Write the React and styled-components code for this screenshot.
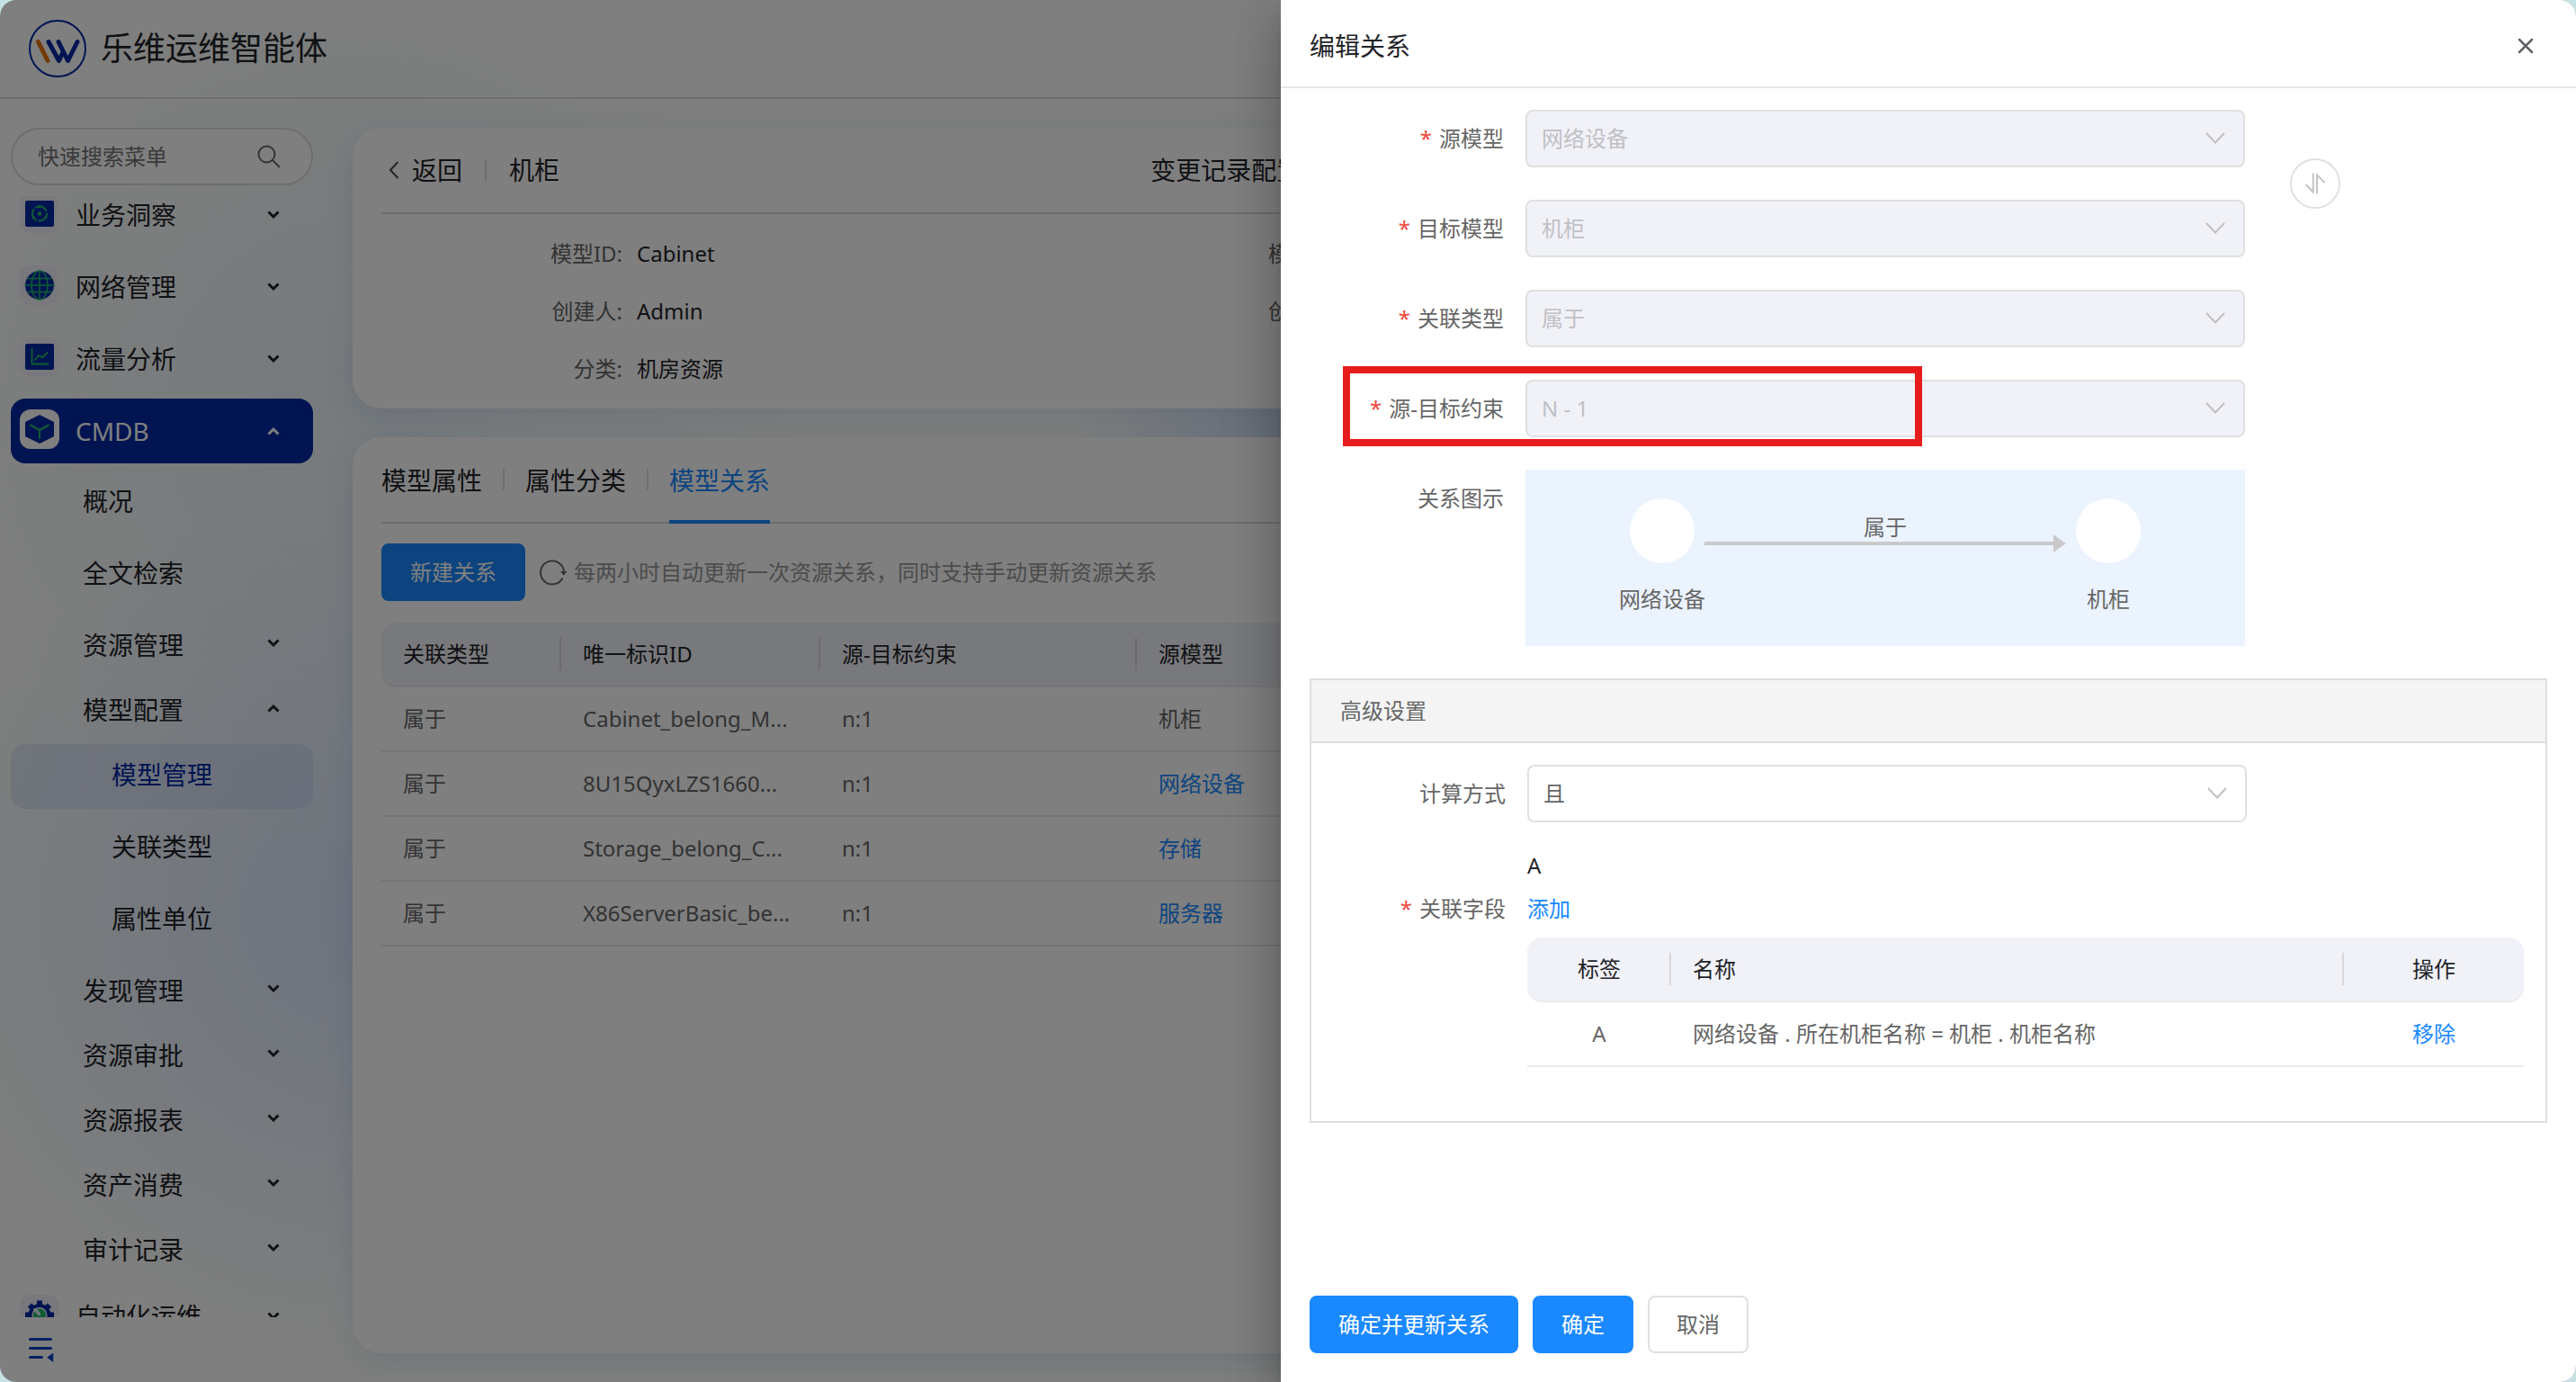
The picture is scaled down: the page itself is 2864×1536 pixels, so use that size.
import { useLayoutEffect, useRef, useState } from "react";
import styled, { createGlobalStyle, css } from "styled-components";

const navy = "#0029a3";
const blue = "#1a89ff";
const green = "#22b866";

const menu = [
  { label: "业务洞察", level: 0, icon: "insight", arrow: "down" },
  { label: "网络管理", level: 0, icon: "globe", arrow: "down" },
  { label: "流量分析", level: 0, icon: "chart", arrow: "down" },
  { label: "CMDB", level: 0, icon: "cube", arrow: "up", open: true },
  { label: "概况", level: 1 },
  { label: "全文检索", level: 1 },
  { label: "资源管理", level: 1, arrow: "down" },
  { label: "模型配置", level: 1, arrow: "up" },
  { label: "模型管理", level: 2, current: true },
  { label: "关联类型", level: 2 },
  { label: "属性单位", level: 2 },
  { label: "发现管理", level: 1, arrow: "down" },
  { label: "资源审批", level: 1, arrow: "down" },
  { label: "资源报表", level: 1, arrow: "down" },
  { label: "资产消费", level: 1, arrow: "down" },
  { label: "审计记录", level: 1, arrow: "down" },
  { label: "自动化运维", level: 0, icon: "gear", arrow: "down" },
];

const infos = [
  { label: "模型ID:", value: "Cabinet" },
  { label: "模型名称:", value: "机柜" },
  { label: "创建人:", value: "Admin" },
  { label: "创建时间:", value: "-" },
  { label: "分类:", value: "机房资源" },
];

const relations = [
  { type: "属于", uid: "Cabinet_belong_M...", rule: "n:1", source: "机柜" },
  { type: "属于", uid: "8U15QyxLZS1660...", rule: "n:1", source: "网络设备", link: true },
  { type: "属于", uid: "Storage_belong_C...", rule: "n:1", source: "存储", link: true },
  { type: "属于", uid: "X86ServerBasic_be...", rule: "n:1", source: "服务器", link: true },
];

const Logo = () => (
  <svg width="64" height="64" viewBox="0 0 64 64" fill="none" strokeLinecap="round" strokeLinejoin="round">
    <circle cx="32" cy="32" r="31" stroke={navy} strokeWidth="2" />
    <path d="M10.500 24.500 21 45.500" stroke="#e8740c" strokeWidth="5" />
    <path d="M22 24.500 33.500 45.500 38 36M33 24.500 43.500 45.500 54 24.500" stroke={navy} strokeWidth="5" />
  </svg>
);

const MenuIcon = ({ name }) => (
  <svg width="44" height="44" viewBox="0 0 44 44" fill="none" strokeLinecap="round" strokeLinejoin="round">
    {name === "insight" && (
      <>
        <rect x="6" y="8" width="32" height="29" rx="2" fill={navy} />
        <circle cx="22" cy="22.500" r="2.300" fill={green} />
        <circle cx="22" cy="22.500" r="8" stroke={green} strokeWidth="2" strokeDasharray="13 3.700" />
        <circle cx="22" cy="14.500" r="1.500" fill={green} />
        <circle cx="29" cy="26.500" r="1.500" fill={green} />
        <circle cx="15" cy="26.500" r="1.500" fill={green} />
      </>
    )}
    {name === "globe" && (
      <>
        <circle cx="22" cy="22" r="16" fill={navy} />
        <g stroke={green} strokeWidth="1.500">
          <ellipse cx="22" cy="22" rx="9" ry="16" />
          <path d="M22 6v32M6 22h32M8.500 14.500h27M8.500 29.500h27" />
        </g>
      </>
    )}
    {name === "chart" && (
      <>
        <rect x="6" y="7" width="32" height="29" rx="2" fill={navy} />
        <path d="M13.500 13v16.500H31.500M17 25l4-5 4 2.500 5.500-5.500" stroke={green} strokeWidth="1.800" />
      </>
    )}
    {name === "cube" && (
      <>
        <path d="M22 6 38 14v16L22 38 6 30V14z" fill={navy} />
        <path d="M12 17.500 22 23 32 17.500M22 23v9" stroke={green} strokeWidth="2" />
      </>
    )}
    {name === "gear" && (
      <>
        <circle cx="22" cy="22.500" r="12.500" fill={navy} />
        <path
          d="M22 6.500v32M6 22.500h32M11 11.500l22 22M33 11.500l-22 22"
          stroke={navy}
          strokeWidth="6"
          strokeLinecap="butt"
        />
        <circle cx="22" cy="22.500" r="8.500" fill="#e8e9fa" />
        <circle cx="22" cy="22.500" r="7" fill={green} />
        <path d="M17 16.500l4.500 5" stroke="#e8e9fa" strokeWidth="3.500" />
      </>
    )}
  </svg>
);

const Arrow = ({ dir }) => (
  <svg width="14" height="10" viewBox="0 0 14 10" fill="none" stroke="currentColor" strokeWidth="3">
    <path d={dir === "up" ? "M1.500 8.500 7 3l5.500 5.500" : "M1.500 1.500 7 7l5.500-5.500"} />
  </svg>
);

const SelectField = ({ id, label, value, required, disabled }) => (
  <Row>
    <Label htmlFor={id}>
      {required && <Star>*</Star>}
      {label}
    </Label>
    <SelectBox>
      <Select id={id} disabled={disabled} defaultValue={value}>
        <option value={value}>{value}</option>
      </Select>
      <svg width="22" height="14" viewBox="0 0 22 14" fill="none" stroke="#c0c0c4" strokeWidth="2" strokeLinecap="round">
        <path d="M1.500 1.500 11 11.500 20.500 1.500" />
      </svg>
    </SelectBox>
  </Row>
);

const Sidebar = () => {
  const list = useRef(null);

  useLayoutEffect(() => {
    list.current.scrollTop = 15;
  }, []);

  return (
    <Side>
      <Search>
        <input type="text" placeholder="快速搜索菜单" aria-label="快速搜索菜单" />
        <svg width="26" height="26" viewBox="0 0 26 26" fill="none" stroke="#666" strokeWidth="2" strokeLinecap="round">
          <circle cx="10.500" cy="10.500" r="9" />
          <path d="M17 17l7.500 7.500" />
        </svg>
      </Search>
      <Menu ref={list}>
        {menu.map((item) => (
          <MenuItem
            key={item.label}
            $level={item.level}
            $open={item.open}
            $current={item.current}
            $spaced={item.level === 0 || !item.arrow}
          >
            {item.icon && (
              <IconTile $open={item.open}>
                <MenuIcon name={item.icon} />
              </IconTile>
            )}
            <span>{item.label}</span>
            {item.arrow && <Arrow dir={item.arrow} />}
          </MenuItem>
        ))}
      </Menu>
      <Collapse aria-label="收起菜单">
        <svg width="28" height="28" viewBox="0 0 28 28" fill="none" stroke="#0a43c8" strokeWidth="3" strokeLinecap="round">
          <path d="M1.500 2.500h23M1.500 12.500h23M1.500 22.500h13" />
          <path d="M26.500 19v7.500l-5-3.800z" fill="#0a43c8" strokeWidth="1.500" />
        </svg>
      </Collapse>
    </Side>
  );
};

const ModelPage = () => (
  <Main>
    <Card>
      <PageHead>
        <Crumb>
          <Back>
            <svg width="12" height="20" viewBox="0 0 12 20" fill="none" stroke="#4a4d55" strokeWidth="2">
              <path d="M10.500 1 2 10l8.500 9" />
            </svg>
            返回
          </Back>
          <Divider />
          <span>机柜</span>
        </Crumb>
        <span>变更记录配置</span>
      </PageHead>
      <InfoGrid>
        {infos.map((info) => (
          <Info key={info.label}>
            <dt>{info.label}</dt>
            <dd>{info.value}</dd>
          </Info>
        ))}
      </InfoGrid>
    </Card>
    <Card $grow>
      <Tabs>
        <Tab>模型属性</Tab>
        <Divider />
        <Tab>属性分类</Tab>
        <Divider />
        <Tab $active>模型关系</Tab>
      </Tabs>
      <Toolbar>
        <Button $primary>新建关系</Button>
        <Hint>
          <svg width="30" height="30" viewBox="0 0 30 30" fill="none" stroke="#666" strokeWidth="2">
            <path d="M25.500 21.500A13 13 0 1 1 27 16" />
            <path d="M23 14h7.500l-3.700 4.500z" fill="#666" stroke="none" />
          </svg>
          每两小时自动更新一次资源关系，同时支持手动更新资源关系
        </Hint>
      </Toolbar>
      <Table>
        <colgroup>
          <Col $w={200} />
          <Col $w={288} />
          <Col $w={352} />
          <col />
        </colgroup>
        <thead>
          <tr>
            <th>关联类型</th>
            <th>唯一标识ID</th>
            <th>源-目标约束</th>
            <th>源模型</th>
          </tr>
        </thead>
        <tbody>
          {relations.map((r) => (
            <tr key={r.uid}>
              <td>{r.type}</td>
              <td>{r.uid}</td>
              <td>{r.rule}</td>
              <td>{r.link ? <a href="#model">{r.source}</a> : r.source}</td>
            </tr>
          ))}
        </tbody>
      </Table>
    </Card>
  </Main>
);

const RelationDrawer = ({ onClose }) => (
  <Drawer role="dialog" aria-label="编辑关系">
    <DrawerHead>
      <h2>编辑关系</h2>
      <IconButton aria-label="关闭" onClick={onClose}>
        <svg width="18" height="18" viewBox="0 0 18 18" stroke="#606266" strokeWidth="2.500" strokeLinecap="round">
          <path d="M2 2l14 14M16 2 2 16" />
        </svg>
      </IconButton>
    </DrawerHead>

    <DrawerBody>
      <SwapGroup>
        <Fields>
          <SelectField id="source" label="源模型" value="网络设备" required disabled />
          <SelectField id="target" label="目标模型" value="机柜" required disabled />
        </Fields>
        <Swap disabled aria-label="交换">
          <svg width="24" height="24" viewBox="0 0 24 24" fill="none" stroke="#c4c4c8" strokeWidth="2" strokeLinecap="round">
            <path d="M9.800 1.500v20L2 13.500M14 22.500V2.500l8 8" />
          </svg>
        </Swap>
      </SwapGroup>
      <SelectField id="type" label="关联类型" value="属于" required disabled />
      <Marked>
        <SelectField id="rule" label="源-目标约束" value="N - 1" required disabled />
      </Marked>
      <Row>
        <Label as="span">关系图示</Label>
        <Diagram>
          <Node>
            <i />
            网络设备
          </Node>
          <Edge>
            属于
            <svg width="402" height="20" viewBox="0 0 402 20" fill="#c9c9cc">
              <path d="M0 8h388V0l14 10-14 10v-8H0z" />
            </svg>
          </Edge>
          <Node>
            <i />
            机柜
          </Node>
        </Diagram>
      </Row>

      <Panel>
        <PanelTitle>高级设置</PanelTitle>
        <PanelBody>
          <SelectField id="mode" label="计算方式" value="且" />
          <Row>
            <FieldLabel as="span">
              <Star>*</Star>
              关联字段
            </FieldLabel>
            <FieldList>
              <Line>A</Line>
              <Line>
                <a href="#add">添加</a>
              </Line>
              <Table $centered>
                <colgroup>
                  <Col $w={160} />
                  <col />
                  <Col $w={200} />
                </colgroup>
                <thead>
                  <tr>
                    <th>标签</th>
                    <th>名称</th>
                    <th>操作</th>
                  </tr>
                </thead>
                <tbody>
                  <tr>
                    <td>A</td>
                    <td>网络设备 . 所在机柜名称 = 机柜 . 机柜名称</td>
                    <td>
                      <a href="#remove">移除</a>
                    </td>
                  </tr>
                </tbody>
              </Table>
            </FieldList>
          </Row>
        </PanelBody>
      </Panel>
    </DrawerBody>

    <DrawerFoot>
      <Button $primary>确定并更新关系</Button>
      <Button $primary>确定</Button>
      <Button onClick={onClose}>取消</Button>
    </DrawerFoot>
  </Drawer>
);

const App = () => {
  const [open, setOpen] = useState(true);

  return (
    <>
      <GlobalStyle />
      <Frame>
        <TopBar>
          <Logo />
          <h1>乐维运维智能体</h1>
        </TopBar>
        <Content>
          <Sidebar />
          <ModelPage />
        </Content>
        {open && (
          <Mask>
            <RelationDrawer onClose={() => setOpen(false)} />
          </Mask>
        )}
      </Frame>
    </>
  );
};

const GlobalStyle = createGlobalStyle`
  *, *::before, *::after {
    box-sizing: border-box;
  }

  body {
    margin: 0;
    background: #c5e1e4;
    color: #1f2329;
    font-family: "Noto Sans", "Noto Sans CJK SC", sans-serif;
    font-size: 24px;
    line-height: 32px;
  }

  h1, h2, dl, dd {
    margin: 0;
    font-weight: normal;
  }

  button, input, select {
    font: inherit;
    color: inherit;
  }

  button {
    border: none;
    padding: 0;
    background: none;
    text-align: left;
    cursor: pointer;
  }

  a {
    color: ${blue};
    text-decoration: none;
  }
`;

const Frame = styled.div`
  position: relative;
  display: flex;
  flex-direction: column;
  height: 100vh;
  border-radius: 18px;
  overflow: hidden;
  background:
    radial-gradient(circle at 14% 66%, rgba(210, 224, 252, 0.8), transparent 18%),
    radial-gradient(circle at 14% 30%, rgba(232, 243, 250, 0.8), transparent 18%),
    radial-gradient(circle at 52% 30%, rgba(196, 218, 250, 0.9), transparent 16%),
    #fcfefc;
`;

const TopBar = styled.header`
  display: flex;
  align-items: center;
  gap: 16px;
  height: 110px;
  padding: 0 32px;
  border-bottom: 2px solid #dcdcdc;

  h1 {
    font-size: 36px;
    line-height: 48px;
  }
`;

const Content = styled.div`
  flex: 1;
  display: flex;
  gap: 32px;
  min-height: 0;
`;

const Side = styled.aside`
  flex: none;
  display: flex;
  flex-direction: column;
  width: 360px;
  padding: 32px 12px 0;
`;

const Search = styled.label`
  display: flex;
  align-items: center;
  height: 64px;
  margin-bottom: 12px;
  padding: 0 34px 0 28px;
  border: 2px solid #dcdcdc;
  border-radius: 32px;
  background: #fff;

  input {
    flex: 1;
    min-width: 0;
    padding: 0;
    border: none;
    outline: none;
    background: none;
  }

  input::placeholder {
    color: #757575;
  }
`;

const Menu = styled.nav`
  flex: 1;
  display: flex;
  flex-direction: column;
  min-height: 0;
  overflow-y: auto;
  scrollbar-width: none;
`;

const indents = ["10px", "80px", "112px"];

const MenuItem = styled.button`
  flex: none;
  display: flex;
  align-items: center;
  gap: 18px;
  height: 72px;
  margin-bottom: ${(p) => (p.$spaced ? "8px" : "0")};
  padding: 0 37px ${(p) => (p.$level ? "4px" : "0")} ${(p) => indents[p.$level]};
  border-radius: 16px;
  font-size: 28px;

  span {
    flex: 1;
  }

  > svg {
    margin-bottom: ${(p) => (p.$level === 1 ? "4px" : "0")};
  }

  ${(p) =>
    p.$open &&
    css`
      background: ${navy};
      color: #fff;
    `}

  ${(p) =>
    p.$current &&
    css`
      background: rgba(190, 206, 240, 0.4);
      color: ${navy};
    `}
`;

const IconTile = styled.i`
  display: flex;
  margin-bottom: 4px;
  border-radius: 12px;
  background: ${(p) => (p.$open ? "#fff" : "#f0f1fa")};
`;

const Collapse = styled.button`
  display: flex;
  align-items: center;
  height: 72px;
  padding-left: 20px;
`;

const Main = styled.main`
  flex: 1;
  display: flex;
  flex-direction: column;
  gap: 32px;
  min-width: 0;
  padding: 32px 32px 32px 0;
`;

const Card = styled.section`
  flex: ${(p) => (p.$grow ? "1" : "none")};
  padding: 0 32px;
  border-radius: 32px;
  background: #fff;
  box-shadow: 0 8px 32px rgba(60, 90, 170, 0.14);
`;

const PageHead = styled.div`
  display: grid;
  grid-template-columns: 36% 1fr;
  align-items: center;
  height: 96px;
  border-bottom: 2px solid #dcdcdc;
  font-size: 28px;
`;

const Crumb = styled.div`
  display: flex;
  align-items: center;
  gap: 25px;
`;

const Back = styled.button`
  display: flex;
  align-items: center;
  gap: 14px;
  padding-left: 8px;
`;

const Divider = styled.i`
  width: 2px;
  height: 24px;
  background: #dcdcdc;
`;

const InfoGrid = styled.dl`
  display: grid;
  grid-template-columns: 31% 1fr;
  column-gap: 84px;
  padding: 12px 0;
`;

const Info = styled.div`
  display: grid;
  grid-template-columns: 268px 1fr;
  column-gap: 16px;
  line-height: 64px;

  dt {
    color: #666;
    text-align: right;
  }
`;

const Tabs = styled.div`
  display: flex;
  align-items: center;
  gap: 23px;
  height: 96px;
  border-bottom: 2px solid #dcdcdc;
`;

const Tab = styled.button`
  align-self: flex-start;
  height: 96px;
  border-top: 4px solid transparent;
  border-bottom: 4px solid ${(p) => (p.$active ? blue : "transparent")};
  color: ${(p) => (p.$active ? blue : "inherit")};
  font-size: 28px;
`;

const Toolbar = styled.div`
  display: flex;
  align-items: center;
  gap: 16px;
  margin: 22px 0 24px;
`;

const Hint = styled.div`
  display: flex;
  align-items: center;
  gap: 8px;
  color: #999;
`;

const Button = styled.button`
  height: 64px;
  padding: 0 30px;
  border: 2px solid ${(p) => (p.$primary ? blue : "#e0e0e0")};
  border-radius: 8px;
  background: ${(p) => (p.$primary ? blue : "#fff")};
  color: ${(p) => (p.$primary ? "#fff" : "#666")};
`;

const Col = styled.col`
  width: ${(p) => p.$w}px;
`;

const Table = styled.table`
  width: 100%;
  table-layout: fixed;
  border-spacing: 0;

  th, td {
    height: 72px;
    padding: 0 24px;
    border-bottom: 2px solid #ebebeb;
    text-align: left;
    font-weight: normal;
  }

  td {
    color: #666;
  }

  th {
    background: #f1f2f8;
  }

  th:not(:last-child) {
    background: linear-gradient(#d8d8dc, #d8d8dc) right center / 2px 36px no-repeat #f1f2f8;
  }

  th:first-child {
    border-radius: 16px 0 0 16px;
  }

  th:last-child {
    border-radius: 0 16px 16px 0;
  }

  ${(p) =>
    p.$centered &&
    css`
      th:first-child, td:first-child, th:last-child, td:last-child {
        text-align: center;
      }
    `}
`;

const Mask = styled.div`
  position: absolute;
  inset: 0;
  display: flex;
  justify-content: flex-end;
  background: rgba(0, 0, 0, 0.5);
`;

const Drawer = styled.div`
  display: flex;
  flex-direction: column;
  width: calc(50% + 8px);
  background: #fff;
  box-shadow:
    0 16px 20px -10px rgba(0, 0, 0, 0.2),
    0 32px 48px 4px rgba(0, 0, 0, 0.14),
    0 12px 60px 10px rgba(0, 0, 0, 0.12);
`;

const DrawerHead = styled.header`
  display: flex;
  align-items: center;
  justify-content: space-between;
  height: 98px;
  padding: 6px 44px 0 32px;
  border-bottom: 2px solid #e6e6e6;

  h2 {
    font-size: 28px;
  }
`;

const IconButton = styled.button`
  display: flex;
  padding: 3px;
`;

const DrawerBody = styled.div`
  flex: 1;
  display: flex;
  flex-direction: column;
  gap: 36px;
  min-height: 0;
  padding: 24px 32px;
  overflow-y: auto;
`;

const SwapGroup = styled.div`
  display: flex;
  align-items: center;
  gap: 50px;
`;

const Fields = styled.div`
  flex: 0 1 1040px;
  display: flex;
  flex-direction: column;
  gap: 36px;
`;

const Row = styled.div`
  display: flex;
`;

const Label = styled.label`
  flex: 0 0 240px;
  padding-right: 24px;
  color: #666;
  line-height: 64px;
  text-align: right;
`;

const FieldLabel = styled(Label)`
  padding-top: 48px;
  line-height: 48px;
`;

const Star = styled.span`
  margin-right: 8px;
  color: #f04a3e;
`;

const SelectBox = styled.div`
  position: relative;
  flex: 0 1 800px;

  svg {
    position: absolute;
    top: 25px;
    right: 22px;
    pointer-events: none;
  }
`;

const Select = styled.select`
  display: block;
  width: 100%;
  height: 64px;
  padding: 0 56px 0 16px;
  border: 2px solid #e0e0e0;
  border-radius: 8px;
  appearance: none;
  background: #fff;
  color: #666;

  &:disabled {
    background: #f1f2f8;
    color: #c0c0c4;
    opacity: 1;
  }
`;

/* red frame drawn over the row, does not take part in its layout */
const Marked = styled.div`
  position: relative;

  &::after {
    content: "";
    position: absolute;
    top: -15px;
    left: 37px;
    width: 644px;
    height: 89px;
    border: 8px solid #e61c1c;
    pointer-events: none;
  }
`;

const Swap = styled.button`
  display: flex;
  align-items: center;
  justify-content: center;
  width: 56px;
  height: 56px;
  border: 2px solid #e0e0e0;
  border-radius: 50%;
  background: #fff;
`;

const Diagram = styled.div`
  flex: 0 1 800px;
  display: flex;
  justify-content: center;
  height: 196px;
  padding-top: 32px;
  background: #ebf3ff;
  color: #666;
`;

const Node = styled.div`
  display: flex;
  flex-direction: column;
  align-items: center;
  gap: 24px;
  width: 96px;

  i {
    width: 72px;
    height: 72px;
    border-radius: 50%;
    background: #fff;
  }
`;

const Edge = styled.div`
  display: flex;
  flex-direction: column;
  align-items: center;
  width: 400px;
  padding-top: 24px;
  line-height: 16px;

  svg {
    flex: none;
  }
`;

const Panel = styled.section`
  border: 2px solid #dcdee4;
`;

const PanelTitle = styled.div`
  height: 70px;
  padding: 0 32px;
  border-bottom: 2px solid #dcdee4;
  background: #f4f4f4;
  color: #666;
  line-height: 68px;
`;

const PanelBody = styled.div`
  display: flex;
  flex-direction: column;
  gap: 24px;
  padding: 24px 24px 60px 0;
`;

const FieldList = styled.div`
  flex: 1;
`;

const Line = styled.div`
  height: 48px;
  line-height: 48px;

  & + table {
    margin-top: 8px;
  }
`;

const DrawerFoot = styled.footer`
  display: flex;
  gap: 16px;
  padding: 32px;
`;

export default App;
